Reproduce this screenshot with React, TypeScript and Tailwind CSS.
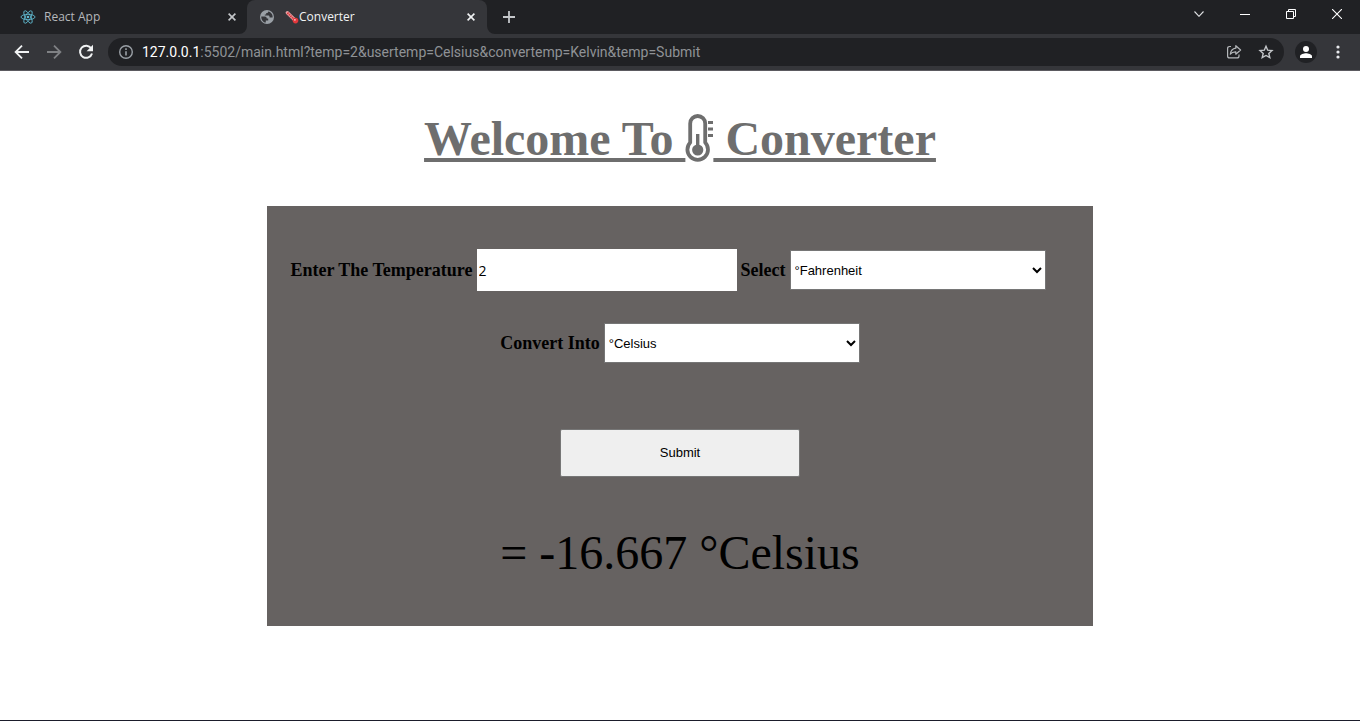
import { useState } from "react";

const units = ["Fahrenheit", "Celsius", "Kelvin"];

function ReactLogo() {
  return (
    <svg viewBox="0 0 24 24" className="size-4 shrink-0" fill="none" stroke="#5fb9cf" strokeWidth="1.3" aria-hidden="true">
      <ellipse cx="12" cy="12" rx="10.5" ry="4" />
      <ellipse cx="12" cy="12" rx="10.5" ry="4" transform="rotate(60 12 12)" />
      <ellipse cx="12" cy="12" rx="10.5" ry="4" transform="rotate(120 12 12)" />
      <circle cx="12" cy="12" r="2" fill="#5fb9cf" stroke="none" />
    </svg>
  );
}

function Globe() {
  return (
    <svg viewBox="0 0 16 16" className="size-4 shrink-0" aria-hidden="true">
      <circle cx="8" cy="8" r="7" fill="#9aa0a6" />
      <path
        d="M2.300 7.400H5.800Q7.800 7.400 7.800 9.400H9.200V11.400H6.800V13.600C3.800 13 2.100 10.300 2.300 7.400ZM9.200 2.400C9.200 3.600 8.600 4 7.200 4V5.400H5.800V6.400H9.800Q10.600 6.400 10.600 8.600H13.600C14 5.600 12.200 3 9.200 2.400Z"
        fill="#35363a"
      />
    </svg>
  );
}

function RedThermometer() {
  return (
    <svg viewBox="0 0 14 14" className="h-3.5 w-3.5 shrink-0" aria-hidden="true">
      <path d="M2.4 2.8 9.6 9.8" stroke="#e9a3a6" strokeWidth="3.4" strokeLinecap="round" />
      <path d="M2.4 2.8 9.6 9.8" stroke="#d93a3f" strokeWidth="2.2" strokeDasharray="1.400 0.700" />
      <circle cx="10.5" cy="10.6" r="2.8" fill="#e2383c" />
      <circle cx="9.9" cy="9.8" r="0.9" fill="#f9c9ca" />
    </svg>
  );
}

function Cross({ className }: { className: string }) {
  return (
    <svg viewBox="0 0 8 8" className={className} fill="none" stroke="currentColor" strokeWidth="1.6" aria-hidden="true">
      <path d="m.6.6 6.8 6.8M7.4.6.6 7.4" />
    </svg>
  );
}

function TabStrip() {
  return (
    <div className="flex h-[34px] bg-[#202124] text-xs text-[#9fa2a6]">
      <div className="flex w-[247px] items-center gap-2 pr-[11px] pl-5">
        <ReactLogo />
        <span className="flex-1 text-[#b4b7bb]">React App</span>
        <button type="button" aria-label="Close React App" className="text-[#c4c7ca]">
          <Cross className="size-2" />
        </button>
      </div>
      <div className="relative flex w-[240px] items-center rounded-t-lg bg-[#35363a] pr-3 pl-3 text-[#f1f3f4]">
        <svg viewBox="0 0 8 8" className="absolute bottom-0 -left-2 size-2" aria-hidden="true">
          <path d="M8 0v8H0a8 8 0 0 0 8-8Z" fill="#35363a" />
        </svg>
        <svg viewBox="0 0 8 8" className="absolute -right-2 bottom-0 size-2" aria-hidden="true">
          <path d="M0 0v8h8a8 8 0 0 1-8-8Z" fill="#35363a" />
        </svg>
        <Globe />
        <span className="ml-2.5 flex flex-1 items-center">
          <RedThermometer />
          Converter
        </span>
        <button type="button" aria-label="Close Converter">
          <Cross className="size-2" />
        </button>
      </div>
      <button type="button" aria-label="New tab" className="ml-4 text-[#c4c7ca]">
        <svg viewBox="0 0 12 12" className="size-3" stroke="currentColor" strokeWidth="1.8" aria-hidden="true">
          <path d="M6 0v12M0 6h12" />
        </svg>
      </button>
      <div className="ml-auto flex h-7 items-center text-white">
        <button type="button" aria-label="Search tabs" className="flex w-[46px] justify-center">
          <svg viewBox="0 0 10 6" className="h-1.5 w-2.5" fill="none" stroke="#e0e2e4" strokeWidth="1.1" aria-hidden="true">
            <path d="m.5.5 4.5 4.8L9.500.5" />
          </svg>
        </button>
        <button type="button" aria-label="Minimize" className="flex w-[46px] justify-center">
          <svg viewBox="0 0 10 10" className="size-2.5" stroke="currentColor" aria-hidden="true">
            <path d="M0 5.500h10" />
          </svg>
        </button>
        <button type="button" aria-label="Restore" className="flex w-[46px] justify-center">
          <svg viewBox="0 0 10 10" className="size-2.5" fill="none" stroke="currentColor" aria-hidden="true">
            <path d="M.5 2.500h7v7h-7zM2.500 2.500v-2h7v7h-2" />
          </svg>
        </button>
        <button type="button" aria-label="Close window" className="flex w-[46px] justify-center">
          <svg viewBox="0 0 10 10" className="size-2.5" stroke="currentColor" strokeWidth="1.1" aria-hidden="true">
            <path d="m0 0 10 10M10 0 0 10" />
          </svg>
        </button>
      </div>
    </div>
  );
}

function Toolbar() {
  return (
    <div className="flex h-[37px] items-center border-b border-[#5b5a60] bg-[#35363a] pr-[15px] pl-[14px]">
      <div className="flex gap-4 text-[#f1f3f4]">
        <button type="button" aria-label="Back">
          <svg viewBox="0 0 16 16" className="size-4" fill="none" stroke="currentColor" strokeWidth="1.8" aria-hidden="true">
            <path d="M15 8H2.200M8 1.600 1.600 8 8 14.400" />
          </svg>
        </button>
        <button type="button" aria-label="Forward" className="text-[#7f8184]">
          <svg viewBox="0 0 16 16" className="size-4" fill="none" stroke="currentColor" strokeWidth="1.8" aria-hidden="true">
            <path d="M1 8h12.800M8 1.600 14.400 8 8 14.400" />
          </svg>
        </button>
        <button type="button" aria-label="Reload">
          <svg viewBox="0 0 16 16" className="size-4" aria-hidden="true">
            <path d="M13.200 4.300A6.100 6.100 0 1 0 14 9.500" fill="none" stroke="currentColor" strokeWidth="2" />
            <path d="M15 .8v6.400H8.600Z" fill="currentColor" />
          </svg>
        </button>
      </div>
      <div className="ml-[14px] flex h-7 flex-1 items-center rounded-full bg-[#202124] pr-[10px] pl-[10px] font-['Roboto','Noto_Sans',sans-serif] text-sm text-[#8f9296]">
        <svg viewBox="0 0 16 16" className="size-4 shrink-0" fill="none" stroke="#9aa0a6" strokeWidth="1.4" aria-hidden="true">
          <circle cx="8" cy="8" r="6.300" />
          <path d="M8 7.200v4.200M8 4.300v1.600" strokeWidth="1.600" />
        </svg>
        <span className="ml-2 flex-1">
          <span className="text-white">127.0.0.1</span>
          :5502/main.html?temp=2&amp;usertemp=Celsius&amp;convertemp=Kelvin&amp;temp=Submit
        </span>
        <button type="button" aria-label="Share this page" className="mr-4">
          <svg viewBox="0 0 16 16" className="size-4" fill="none" stroke="#b4b7ba" strokeWidth="1.200" strokeLinejoin="round" aria-hidden="true">
            <path d="M5 2.500H3.600Q1.600 2.500 1.600 4.500v7.400q0 2 2 2h7.400q2 0 2-2v-1.400" />
            <path d="M9.800 1.700 14.600 6l-4.800 4.200V7.800C7.400 7.700 5.600 8.400 4.300 10.200 4.700 6.900 6.500 4.700 9.800 4.200Z" />
          </svg>
        </button>
        <button type="button" aria-label="Bookmark this tab">
          <svg viewBox="0 0 16 16" className="size-4" fill="none" stroke="#c4c7ca" strokeWidth="1.400" aria-hidden="true">
            <path d="m8 2.200 1.700 4 4.300.4-3.200 2.900 1 4.200L8 11.500l-3.800 2.200 1-4.200L2 6.600l4.300-.4Z" />
          </svg>
        </button>
      </div>
      <button type="button" aria-label="Profile" className="ml-[11px] flex size-[22px] items-center justify-center rounded-full bg-[#202124]">
        <svg viewBox="0 0 14 14" className="size-3.5" fill="#fff" aria-hidden="true">
          <circle cx="7" cy="4" r="3" />
          <path d="M1 13v-1.800C1 9.200 5 8.200 7 8.200s6 1 6 3V13Z" />
        </svg>
      </button>
      <button type="button" aria-label="Menu" className="ml-[14px]">
        <svg viewBox="0 0 14 14" className="size-3.5" fill="#e8eaed" aria-hidden="true">
          <circle cx="7" cy="2" r="1.600" />
          <circle cx="7" cy="7" r="1.600" />
          <circle cx="7" cy="12" r="1.600" />
        </svg>
      </button>
    </div>
  );
}

function Thermometer() {
  return (
    <svg viewBox="0 0 28 50" className="inline-block h-[50px] w-7 align-[-9px]" fill="none" stroke="currentColor" aria-hidden="true">
      <path
        d="M5.200 28.500V9.500a7.500 7.500 0 0 1 15 0v19a10.300 10.300 0 1 1-15 0Z"
        strokeWidth="3.800"
        strokeLinejoin="round"
      />
      <path d="M12.700 20v16" strokeWidth="3.400" />
      <circle cx="12.700" cy="36" r="5.600" fill="currentColor" stroke="none" />
      <path d="M23 8.500h5M23 15h5M23 21.500h5" strokeWidth="3" />
    </svg>
  );
}

function UnitSelect({ id, value, onChange }: { id: string; value: string; onChange: (unit: string) => void }) {
  return (
    <select
      id={id}
      value={value}
      onChange={(event) => onChange(event.target.value)}
      className="h-10 w-64 border border-[#767676] bg-white font-['Liberation_Sans',Arial,sans-serif] text-[13px] font-normal"
    >
      {units.map((unit) => (
        <option key={unit} value={unit}>
          °{unit}
        </option>
      ))}
    </select>
  );
}

export default function App() {
  const [temperature, setTemperature] = useState("2");
  const [from, setFrom] = useState("Fahrenheit");
  const [to, setTo] = useState("Celsius");
  const [result, setResult] = useState("-16.667 °Celsius");

  function convert() {
    const value = Number(temperature);
    const celsius = from === "Fahrenheit" ? ((value - 32) * 5) / 9 : from === "Kelvin" ? value - 273.15 : value;
    const converted = to === "Fahrenheit" ? (celsius * 9) / 5 + 32 : to === "Kelvin" ? celsius + 273.15 : celsius;
    setResult(`${converted.toFixed(3)} °${to}`);
  }

  return (
    <div className="flex min-h-screen flex-col border-b border-[#1b1d2b] bg-white">
      <header className="font-['Open_Sans','Noto_Sans',sans-serif]">
        <TabStrip />
        <Toolbar />
      </header>
      <main className="flex flex-col items-center px-4 pb-8 font-['Liberation_Serif','Times_New_Roman',serif] text-black">
        <h1 className="mt-10 text-5xl leading-[56px] font-bold text-[#6e6e6e] underline">
          Welcome To <Thermometer /> Converter
        </h1>
        <form
          className="mt-[39px] flex w-full max-w-[826px] flex-col items-center bg-[#666261] pt-[43px] pb-[45px] text-lg font-bold"
          onSubmit={(event) => {
            event.preventDefault();
            convert();
          }}
        >
          <div className="flex flex-wrap items-center justify-center gap-1 pr-6">
            <label htmlFor="temperature">Enter The Temperature</label>
            <input
              id="temperature"
              value={temperature}
              onChange={(event) => setTemperature(event.target.value)}
              className="h-[42px] w-[260px] bg-white px-0.5 font-['Open_Sans',sans-serif] text-sm font-normal"
            />
            <label htmlFor="from">Select</label>
            <UnitSelect id="from" value={from} onChange={setFrom} />
          </div>
          <div className="mt-8 flex items-center gap-1">
            <label htmlFor="to">Convert Into</label>
            <UnitSelect id="to" value={to} onChange={setTo} />
          </div>
          <button
            type="submit"
            className="mt-[66px] h-12 w-60 rounded-xs border border-[#767676] bg-[#efefef] font-['Liberation_Sans',Arial,sans-serif] text-[13px] font-normal"
          >
            Submit
          </button>
          <output htmlFor="temperature from to" className="mt-12 text-5xl leading-[56px] font-normal">
            = {result}
          </output>
        </form>
      </main>
    </div>
  );
}
